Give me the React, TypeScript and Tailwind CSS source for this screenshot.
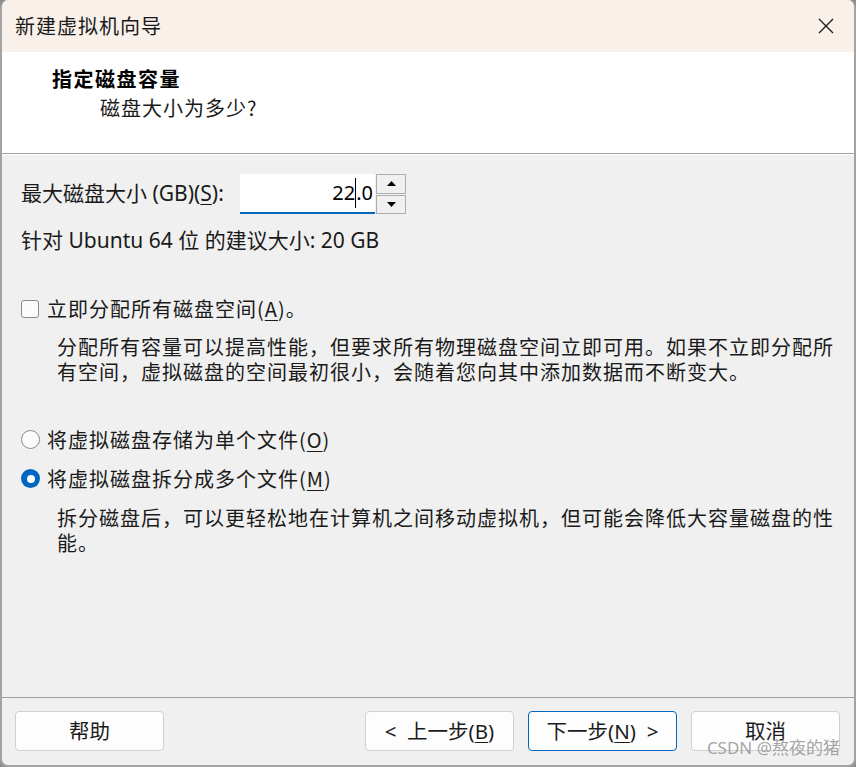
import React from 'react';

const cjk = 'font-["Noto_Sans_CJK_SC",sans-serif]';
const mixed = 'font-["Noto_Sans","Noto_Sans_CJK_SC",sans-serif]';

function U({ children }: { children: React.ReactNode }) {
  return <span className="underline underline-offset-[3px] decoration-1">{children}</span>;
}

function FooterButton({ children, primary }: { children: React.ReactNode; primary?: boolean }) {
  return (
    <button
      className={`w-[149px] h-[40px] rounded-[4px] bg-[#fdfdfd] text-[20.5px] text-[#1b1b1b] ${mixed} flex items-center justify-center ${
        primary ? 'border border-[#0067c0]' : 'border border-[#d0d0d0]'
      }`}
    >
      {children}
    </button>
  );
}

export default function App() {
  return (
    <div className="w-[856px] h-[767px] bg-[#8c8c8c]">
      <div className="w-full h-full rounded-[8px] overflow-hidden border-x-2 border-b-2 border-[#a3a3a3] bg-[#f0f0f0] flex flex-col relative">
        {/* Title bar */}
        <div className="h-[52px] bg-[#f8f0e9] flex items-center justify-between pl-[13px] pr-[20px] shrink-0">
          <span className={`text-[20px] tracking-[1px] text-[#1a1a1a] ${cjk}`}>新建虚拟机向导</span>
          <svg width="16" height="16" viewBox="0 0 16 16">
            <path d="M1 1 L15 15 M15 1 L1 15" stroke="#1a1a1a" strokeWidth="1.3" />
          </svg>
        </div>

        {/* Header */}
        <div className="h-[101px] bg-white pl-[50px] pt-[14px] shrink-0">
          <div className={`text-[20px] leading-[25px] font-bold tracking-[1.5px] text-black ${cjk}`}>指定磁盘容量</div>
          <div className={`mt-[4px] pl-[48px] text-[20px] leading-[25px] tracking-[1px] text-[#1a1a1a] ${cjk}`}>
            磁盘大小为多少?
          </div>
        </div>
        <div className="h-px bg-[#a0a0a0] shrink-0" />
        <div className="h-px bg-white shrink-0" />

        {/* Body */}
        <div className="flex-1 pl-[19px] pt-[19px] text-[#1a1a1a]">
          <div className="flex items-center h-[40px]">
            <label className={`w-[219px] text-[21px] whitespace-nowrap ${mixed}`}>
              最大磁盘大小 (GB)(<U>S</U>):
            </label>
            <div className="w-[135px] h-[40px] bg-white border-b-2 border-[#0067c0] flex items-center justify-end pr-[2px]">
              <span className={`text-[20px] ${mixed} text-black flex items-center`}>
                22
                <span className="inline-block w-px h-[30px] bg-black" />
                .0
              </span>
            </div>
            <div className="w-[30px] h-[40px] ml-px flex flex-col gap-px">
              <div className="h-[19.5px] border border-[#adadad] bg-[#f0f0f0] flex items-center justify-center">
                <svg width="9" height="5" viewBox="0 0 9 5">
                  <path d="M0 5 L4.5 0 L9 5 Z" fill="#000" />
                </svg>
              </div>
              <div className="h-[19.5px] border border-[#adadad] bg-[#f0f0f0] flex items-center justify-center">
                <svg width="9" height="5" viewBox="0 0 9 5">
                  <path d="M0 0 L9 0 L4.5 5 Z" fill="#000" />
                </svg>
              </div>
            </div>
          </div>

          <div className={`mt-[14px] leading-[25px] text-[21px] ${mixed}`}>针对 Ubuntu 64 位 的建议大小: 20 GB</div>

          {/* Allocate now */}
          <div className="mt-[43px] flex items-center h-[25px]">
            <span className="w-[18px] h-[18px] rounded-[3px] border border-[#8a8a8a] bg-[#fbfbfb] shrink-0" />
            <span className={`ml-[8px] text-[20px] tracking-[1px] ${cjk}`}>
              立即分配所有磁盘空间(<U>A</U>)。
            </span>
          </div>
          <div className={`mt-[13px] pl-[36px] text-[20px] leading-[25px] tracking-[1px] whitespace-nowrap ${cjk}`}>
            <div>分配所有容量可以提高性能，但要求所有物理磁盘空间立即可用。如果不立即分配所</div>
            <div>有空间，虚拟磁盘的空间最初很小，会随着您向其中添加数据而不断变大。</div>
          </div>

          {/* Single file */}
          <div className="mt-[43px] flex items-center h-[25px]">
            <span className="w-[19px] h-[19px] rounded-full border border-[#8a8a8a] bg-[#fbfbfb] shrink-0" />
            <span className={`ml-[7px] text-[20px] tracking-[1px] ${cjk}`}>
              将虚拟磁盘存储为单个文件(<U>O</U>)
            </span>
          </div>

          {/* Multiple files */}
          <div className="mt-[14px] flex items-center h-[25px]">
            <span className="w-[19px] h-[19px] rounded-full bg-[#0067c0] shrink-0 flex items-center justify-center">
              <span className="w-[8px] h-[8px] rounded-full bg-white" />
            </span>
            <span className={`ml-[7px] text-[20px] tracking-[1px] ${cjk}`}>
              将虚拟磁盘拆分成多个文件(<U>M</U>)
            </span>
          </div>
          <div className={`mt-[14px] pl-[36px] text-[20px] leading-[25px] tracking-[1px] whitespace-nowrap ${cjk}`}>
            <div>拆分磁盘后，可以更轻松地在计算机之间移动虚拟机，但可能会降低大容量磁盘的性</div>
            <div>能。</div>
          </div>
        </div>

        {/* Footer */}
        <div className="h-px bg-[#a0a0a0] shrink-0" />
        <div className="h-[67px] shrink-0 flex items-start pt-[13px] pl-[13px] pr-[14px]">
          <FooterButton>帮助</FooterButton>
          <div className="flex-1" />
          <div className="flex gap-[14px]">
            <FooterButton>
              &lt;&nbsp; 上一步(<U>B</U>)
            </FooterButton>
            <FooterButton primary>
              下一步(<U>N</U>)&nbsp; &gt;
            </FooterButton>
            <FooterButton>取消</FooterButton>
          </div>
        </div>

        <span
          className={`absolute right-[14px] bottom-[5px] text-[17px] text-[#9a9a9a]/90 ${mixed} pointer-events-none`}
        >
          CSDN @熬夜的猪
        </span>
      </div>
    </div>
  );
}
